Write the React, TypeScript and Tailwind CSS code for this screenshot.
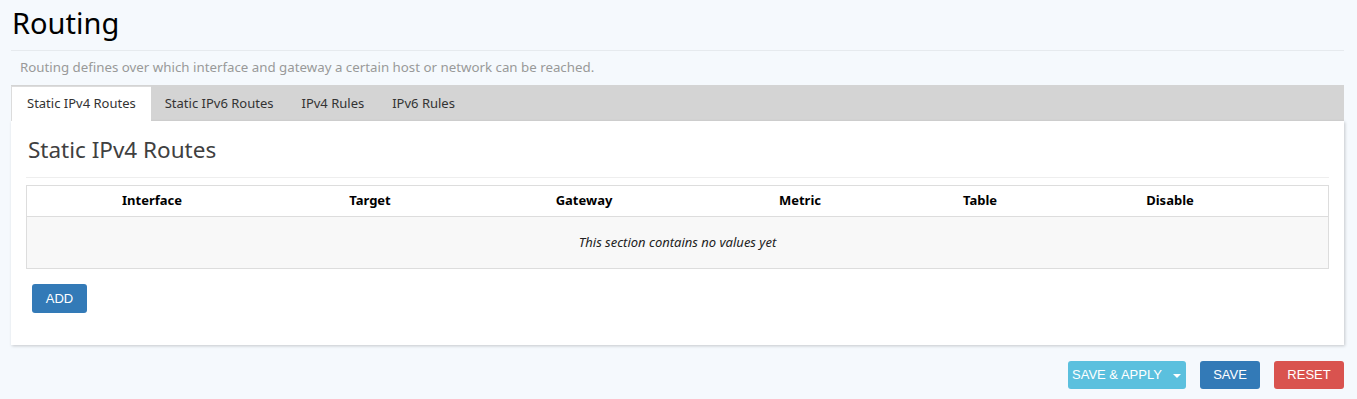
import React from "react";

const cols = ["Interface", "Target", "Gateway", "Metric", "Table", "Disable", ""];

export default function App() {
  return (
    <div
      className="w-[1357px] h-[399px] bg-[#f5f9fd] overflow-hidden"
      style={{ fontFamily: '"Noto Sans", "Open Sans", sans-serif' }}
    >
      <div className="pl-[11px] pr-[13px]">
        <div className="h-[51px] border-b border-[#e6eaee] flex items-start">
          <h1 className="text-[29px] leading-[44px] text-black pl-[1px] pt-[1px]">Routing</h1>
        </div>
        <div className="h-[34px] flex items-center pl-[9px] text-[13.3px] text-[#999999]">
          Routing defines over which interface and gateway a certain host or network can be reached.
        </div>
        <div className="h-[36px] bg-[#d4d4d4] flex items-end text-[13px] text-[#333333]">
          <div className="h-[35px] bg-white border-t border-l border-[#dcdcdc] px-[15px] flex items-center">
            Static IPv4 Routes
          </div>
          <div className="h-[35px] px-[14px] flex items-center">Static IPv6 Routes</div>
          <div className="h-[35px] px-[14px] flex items-center">IPv4 Rules</div>
          <div className="h-[35px] px-[14px] flex items-center">IPv6 Rules</div>
        </div>
        <div className="bg-white shadow-[1px_1px_3px_rgba(0,0,0,0.2)] px-[15px] pb-[32px]">
          <div className="h-[57px] border-b border-[#eeeeee] flex items-center pl-[2px] pt-[2px] text-[22.5px] text-[#404040]">
            Static IPv4 Routes
          </div>
          <div className="mt-[7px] border border-[#dddddd]">
            <div className="grid grid-cols-[250px_186px_242px_190px_170px_210px_1fr] h-[31px] border-b border-[#dddddd] bg-white">
              {cols.map((c, i) => (
                <div key={i} className="flex items-center justify-center text-[13px] font-bold text-black">
                  {c}
                </div>
              ))}
            </div>
            <div className="h-[51px] bg-[#f8f8f8] flex items-center justify-center text-[13px] italic text-[#222222]">
              This section contains no values yet
            </div>
          </div>
          <div className="mt-[15px] pl-[6px]">
            <button
              className="h-[29px] w-[55px] rounded-[3px] bg-[#337ab7] text-white text-[13px]"
              style={{ fontFamily: '"Liberation Sans", Arial, sans-serif' }}
            >
              ADD
            </button>
          </div>
        </div>
        <div
          className="flex justify-end gap-[14px] mt-[16px] text-[13px] text-white"
          style={{ fontFamily: '"Liberation Sans", Arial, sans-serif' }}
        >
          <button className="h-[28px] w-[118px] rounded-[3px] bg-[#5bc0de] flex items-center pl-[4px] gap-[11px]">
            <span>SAVE &amp; APPLY</span>
            <span className="w-0 h-0 border-l-[4px] border-r-[4px] border-t-[4px] border-l-transparent border-r-transparent border-t-white mt-[1px]" />
          </button>
          <button className="h-[28px] w-[60px] rounded-[3px] bg-[#337ab7]">SAVE</button>
          <button className="h-[28px] w-[70px] rounded-[3px] bg-[#d9534f]">RESET</button>
        </div>
      </div>
    </div>
  );
}
